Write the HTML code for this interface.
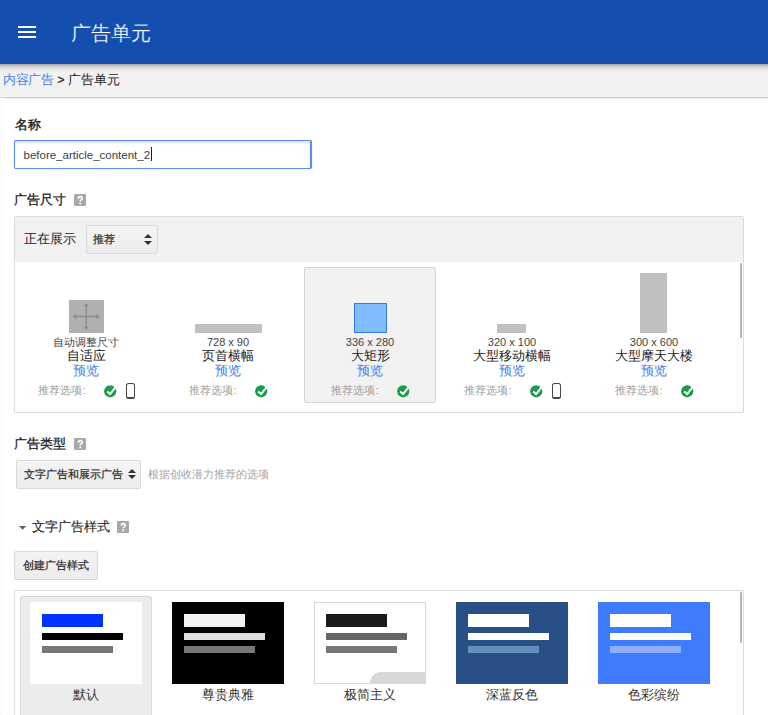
<!DOCTYPE html>
<html><head><meta charset="utf-8">
<style>
*{box-sizing:border-box;margin:0;padding:0}
html,body{width:768px;height:715px;overflow:hidden;background:#fff;font-family:"Liberation Sans",sans-serif;color:#222}
.a{position:absolute;white-space:nowrap}
#hdr{position:absolute;left:0;top:0;width:768px;height:64px;background:#144eaf;z-index:3}
#shd{position:absolute;left:0;top:64px;width:768px;height:9px;background:linear-gradient(rgba(0,0,0,.33),rgba(0,0,0,.12) 30%,rgba(0,0,0,.03) 70%,rgba(0,0,0,0));z-index:3}
.hb{position:absolute;left:18px;width:18px;height:2px;background:#fff}
#crumb{position:absolute;left:0;top:64px;width:768px;height:34px;background:#f2f2f2;border-bottom:1px solid #d0d0d0;box-shadow:0 1px 1px rgba(0,0,0,.07)}
.lbl{font-size:13px;font-weight:bold;color:#222;line-height:16px}
.help{position:absolute;width:12px;height:12px;border-radius:1px;background:#a8a8a8;color:#fff;font-size:12px;font-weight:bold;line-height:13px;text-align:center}
#sizebox{position:absolute;left:14px;top:216px;width:730px;height:197px;border:1px solid #dcdcdc;border-radius:2px;background:#fff;overflow:hidden}
#sizehead{position:absolute;left:0;top:0;width:728px;height:45px;background:#f1f1f1}
.sel{position:absolute;border:1px solid #d9d9d9;border-radius:2px;background:linear-gradient(#f4f4f4,#ececec);}
.arr{position:absolute;width:0;height:0;border-left:4px solid transparent;border-right:4px solid transparent}
.tile{position:absolute;top:50px;width:132px;height:136px}
.tile.on{background:#f1f1f1;box-shadow:inset 0 0 0 1px #d4d4d4;border-radius:3px}
.tile .c{position:absolute;left:0;width:132px;text-align:center;white-space:nowrap}
.dim{font-size:11px;color:#444;line-height:12px}
.nm{font-size:13px;color:#222;line-height:14px}
.pv{font-size:13px;color:#3f7eeb;line-height:14px}
.rec{position:absolute;font-size:11px;color:#9a9a9a;line-height:12px;white-space:nowrap}
.chk{position:absolute;width:12px;height:12px}
.ph{position:absolute;width:9px;height:16px;border:1.4px solid #555;border-radius:2px;border-bottom-width:2px}
.st{position:absolute;top:5px;width:132px;height:130px}
.st.on{background:#ececec;border-radius:3px;box-shadow:inset 0 0 0 1px #d9d9d9}
.pvw{position:absolute;left:10px;top:6px;width:112px;height:82px}
.bar{position:absolute;left:12px}
.stl{position:absolute;left:0;top:92px;width:132px;text-align:center;font-size:13px;color:#333;line-height:14px}
</style></head><body>
<div id="hdr">
  <div class="hb" style="top:26px"></div>
  <div class="hb" style="top:31px"></div>
  <div class="hb" style="top:36px"></div>
  <div class="a" style="left:71px;top:22px;font-size:20px;line-height:22px;color:#fff;-webkit-text-stroke:0.2px #144eaf">广告单元</div>
</div>
<div id="crumb">
  <div class="a" style="left:3px;top:8px;font-size:13px;line-height:16px;color:#4a80ee;letter-spacing:-0.3px">内容广告</div>
  <div class="a" style="left:57.5px;top:8px;font-size:12px;line-height:16px;color:#222;-webkit-text-stroke:0.3px #222">&gt;</div>
  <div class="a" style="left:68px;top:8px;font-size:13px;line-height:16px;color:#222">广告单元</div>
</div>
<div id="shd"></div>

<div class="a lbl" style="left:14.5px;top:117px;font-weight:400;color:#1e1e1e;-webkit-text-stroke:0.4px #1e1e1e">名称</div>
<div class="a" style="left:14px;top:140px;width:298px;height:29px;border:1px solid #5a8cf1;border-right-width:2px;border-radius:2px;box-shadow:0 0 1px rgba(66,133,244,.6),inset 0 2px 2px rgba(0,0,0,.12);"></div>
<div class="a" style="left:0;top:98px;width:5px;height:617px;background:linear-gradient(to right,#f9f9f9,#fff)"></div>
<div class="a" style="left:23.5px;top:148px;font-size:11.5px;line-height:14px;color:#404040">before_article_content_2</div><div class="a" style="left:151px;top:147px;width:1px;height:14px;background:#222"></div>

<div class="a lbl" style="left:14px;top:192px;font-weight:400;color:#1e1e1e;-webkit-text-stroke:0.3px #1e1e1e">广告尺寸</div>
<div class="help" style="left:74px;top:194px"><svg width="12" height="12" viewBox="0 0 12 12" style="position:absolute;left:0;top:0"><path d="M4.3 4.7 Q4.4 2.7 6.2 2.7 Q8.1 2.7 8.1 4.5 Q8.1 5.5 7.1 6.1 Q6.2 6.5 6.2 7.2" stroke="#fff" stroke-width="1.7" fill="none"/><rect x="5.3" y="8.5" width="1.8" height="1.7" fill="#fff"/></svg></div>

<div id="sizebox">
  <div id="sizehead">
    <div class="a" style="left:9px;top:14px;font-size:13px;line-height:16px;color:#222">正在展示</div>
    <div class="sel" style="left:71px;top:8px;width:72px;height:29px">
      <div class="a" style="left:6px;top:7px;font-size:11px;font-weight:400;-webkit-text-stroke:0.25px #333;line-height:13px;color:#2a2a2a">推荐</div>
      <div class="arr" style="left:57px;top:8px;border-bottom:4px solid #333"></div>
      <div class="arr" style="left:57px;top:15px;border-top:4px solid #333"></div>
    </div>
  </div>
  <!-- tiles -->
  <div class="tile" style="left:5px">
    <div class="a" style="left:49px;top:33px;width:35px;height:33px;background:#b0b0b0">
      <svg width="35" height="33" viewBox="0 0 35 33" style="position:absolute;left:0;top:0"><g stroke="#8c8c8c" stroke-width="1.4" fill="none"><line x1="17.3" y1="6" x2="17.3" y2="27"/><line x1="6.5" y1="16.5" x2="28" y2="16.5"/></g><g fill="#8c8c8c"><path d="M14.6 6.6 L17.3 3 L20 6.6Z"/><path d="M14.6 26.4 L17.3 30 L20 26.4Z"/><path d="M7.2 13.8 L3.8 16.5 L7.2 19.2Z"/><path d="M27.4 13.8 L30.8 16.5 L27.4 19.2Z"/></g></svg>
    </div>
    <div class="c dim" style="top:69px">自动调整尺寸</div>
    <div class="c nm" style="top:82px">自适应</div>
    <div class="c pv" style="top:97px">预览</div>
    <div class="row" style="position:absolute;left:0.5px;top:116px;width:132px;display:flex;justify-content:center;align-items:center;height:16px"><span class="rec" style="position:relative;top:-1px">推荐选项:</span><svg class="chk" viewBox="0 0 13 13" style="position:static;width:13px;height:13px;margin-left:18px;overflow:visible"><circle cx="6.2" cy="6.3" r="6.1" fill="#1a9c4b"/><path d="M3.2 6.6 L6.1 9.1 L11.6 2.2" stroke="#fff" stroke-width="2" fill="none" stroke-linecap="butt"/></svg><span style="display:inline-block;margin-left:9px;width:9px;height:16px;border:1.1px solid #484848;border-bottom-width:2.2px;border-radius:2.5px;box-sizing:border-box"></span></div>
  </div>
  <div class="tile" style="left:147px">
    <div class="a" style="left:33px;top:57px;width:67px;height:9px;background:#c0c0c0"></div>
    <div class="c dim" style="top:69px">728 x 90</div>
    <div class="c nm" style="top:82px">页首横幅</div>
    <div class="c pv" style="top:97px">预览</div>
    <div class="row" style="position:absolute;left:0.5px;top:116px;width:132px;display:flex;justify-content:center;align-items:center;height:16px"><span class="rec" style="position:relative;top:-1px">推荐选项:</span><svg class="chk" viewBox="0 0 13 13" style="position:static;width:13px;height:13px;margin-left:18px;overflow:visible"><circle cx="6.2" cy="6.3" r="6.1" fill="#1a9c4b"/><path d="M3.2 6.6 L6.1 9.1 L11.6 2.2" stroke="#fff" stroke-width="2" fill="none" stroke-linecap="butt"/></svg></div>
  </div>
  <div class="tile on" style="left:289px">
    <div class="a" style="left:50px;top:36px;width:33px;height:30px;background:#80bcfc;border:1px solid #2f7de1"></div>
    <div class="c dim" style="top:69px">336 x 280</div>
    <div class="c nm" style="top:82px">大矩形</div>
    <div class="c pv" style="top:97px">预览</div>
    <div class="row" style="position:absolute;left:0.5px;top:116px;width:132px;display:flex;justify-content:center;align-items:center;height:16px"><span class="rec" style="position:relative;top:-1px">推荐选项:</span><svg class="chk" viewBox="0 0 13 13" style="position:static;width:13px;height:13px;margin-left:18px;overflow:visible"><circle cx="6.2" cy="6.3" r="6.1" fill="#1a9c4b"/><path d="M3.2 6.6 L6.1 9.1 L11.6 2.2" stroke="#fff" stroke-width="2" fill="none" stroke-linecap="butt"/></svg></div>
  </div>
  <div class="tile" style="left:431px">
    <div class="a" style="left:51px;top:57px;width:29px;height:9px;background:#c0c0c0"></div>
    <div class="c dim" style="top:69px">320 x 100</div>
    <div class="c nm" style="top:82px">大型移动横幅</div>
    <div class="c pv" style="top:97px">预览</div>
    <div class="row" style="position:absolute;left:0.5px;top:116px;width:132px;display:flex;justify-content:center;align-items:center;height:16px"><span class="rec" style="position:relative;top:-1px">推荐选项:</span><svg class="chk" viewBox="0 0 13 13" style="position:static;width:13px;height:13px;margin-left:18px;overflow:visible"><circle cx="6.2" cy="6.3" r="6.1" fill="#1a9c4b"/><path d="M3.2 6.6 L6.1 9.1 L11.6 2.2" stroke="#fff" stroke-width="2" fill="none" stroke-linecap="butt"/></svg><span style="display:inline-block;margin-left:9px;width:9px;height:16px;border:1.1px solid #484848;border-bottom-width:2.2px;border-radius:2.5px;box-sizing:border-box"></span></div>
  </div>
  <div class="tile" style="left:573px">
    <div class="a" style="left:52px;top:6px;width:27px;height:60px;background:#c0c0c0"></div>
    <div class="c dim" style="top:69px">300 x 600</div>
    <div class="c nm" style="top:82px">大型摩天大楼</div>
    <div class="c pv" style="top:97px">预览</div>
    <div class="row" style="position:absolute;left:0.5px;top:116px;width:132px;display:flex;justify-content:center;align-items:center;height:16px"><span class="rec" style="position:relative;top:-1px">推荐选项:</span><svg class="chk" viewBox="0 0 13 13" style="position:static;width:13px;height:13px;margin-left:18px;overflow:visible"><circle cx="6.2" cy="6.3" r="6.1" fill="#1a9c4b"/><path d="M3.2 6.6 L6.1 9.1 L11.6 2.2" stroke="#fff" stroke-width="2" fill="none" stroke-linecap="butt"/></svg></div>
  </div>
  <div style="position:absolute;left:725px;top:46px;width:2px;height:75px;background:#b2b2b2;border-radius:1px"></div>
</div>

<div class="a lbl" style="left:14px;top:436px;font-weight:400;color:#1e1e1e;-webkit-text-stroke:0.3px #1e1e1e">广告类型</div>
<div class="help" style="left:74px;top:438px"><svg width="12" height="12" viewBox="0 0 12 12" style="position:absolute;left:0;top:0"><path d="M4.3 4.7 Q4.4 2.7 6.2 2.7 Q8.1 2.7 8.1 4.5 Q8.1 5.5 7.1 6.1 Q6.2 6.5 6.2 7.2" stroke="#fff" stroke-width="1.7" fill="none"/><rect x="5.3" y="8.5" width="1.8" height="1.7" fill="#fff"/></svg></div>
<div class="sel" style="left:16px;top:460px;width:125px;height:29px">
  <div class="a" style="left:7px;top:7px;font-size:11px;font-weight:400;-webkit-text-stroke:0.25px #333;line-height:13px;color:#2a2a2a">文字广告和展示广告</div>
  <div class="arr" style="left:111px;top:8px;border-bottom:4px solid #333"></div>
  <div class="arr" style="left:111px;top:14px;border-top:4px solid #333"></div>
</div>
<div class="a" style="left:148px;top:468px;font-size:11px;line-height:13px;color:#a2a2a2">根据创收潜力推荐的选项</div>

<svg style="position:absolute;left:18px;top:525px" width="10" height="6" viewBox="0 0 10 6"><path d="M1 1 L8.2 1 L4.6 4.8Z" fill="#606060"/></svg>
<div class="a" style="left:32px;top:519px;font-size:13px;line-height:16px;color:#2a2a2a;font-weight:400;-webkit-text-stroke:0.15px #2a2a2a">文字广告样式</div>
<div class="help" style="left:117px;top:521px"><svg width="12" height="12" viewBox="0 0 12 12" style="position:absolute;left:0;top:0"><path d="M4.3 4.7 Q4.4 2.7 6.2 2.7 Q8.1 2.7 8.1 4.5 Q8.1 5.5 7.1 6.1 Q6.2 6.5 6.2 7.2" stroke="#fff" stroke-width="1.7" fill="none"/><rect x="5.3" y="8.5" width="1.8" height="1.7" fill="#fff"/></svg></div>

<div class="sel" style="left:14px;top:551px;width:84px;height:29px">
  <div class="a" style="left:8px;top:7px;font-size:11px;font-weight:400;-webkit-text-stroke:0.25px #333;line-height:13px;color:#2a2a2a">创建广告样式</div>
</div>

<div id="stylebox" style="position:absolute;left:14px;top:590px;width:730px;height:140px;border:1px solid #dcdcdc;border-radius:2px;overflow:hidden">
  <div class="st on" style="left:5px">
    <div class="pvw" style="background:#fff">
      <div class="bar" style="top:12px;width:61px;height:13px;background:#0033ff"></div>
      <div class="bar" style="top:31px;width:81px;height:7px;background:#000"></div>
      <div class="bar" style="top:44px;width:71px;height:7px;background:#777"></div>
    </div>
    <div class="stl">默认</div>
  </div>
  <div class="st" style="left:147px">
    <div class="pvw" style="background:#000">
      <div class="bar" style="top:12px;width:61px;height:13px;background:#f2f2f2"></div>
      <div class="bar" style="top:31px;width:81px;height:7px;background:#ddd"></div>
      <div class="bar" style="top:44px;width:71px;height:7px;background:#777"></div>
    </div>
    <div class="stl">尊贵典雅</div>
  </div>
  <div class="st" style="left:289px">
    <div class="pvw" style="background:#fff;border:1px solid #d8d8d8;overflow:hidden">
      <div class="bar" style="left:11px;top:11px;width:61px;height:13px;background:#1a1a1a"></div>
      <div class="bar" style="left:11px;top:30px;width:81px;height:7px;background:#666"></div>
      <div class="bar" style="left:11px;top:43px;width:71px;height:7px;background:#777"></div>
      <div style="position:absolute;left:55px;top:69px;width:80px;height:30px;background:#d8d8d8;border-top-left-radius:11px"></div>
    </div>
    <div class="stl">极简主义</div>
  </div>
  <div class="st" style="left:431px">
    <div class="pvw" style="background:#285086">
      <div class="bar" style="top:12px;width:61px;height:13px;background:#fff"></div>
      <div class="bar" style="top:31px;width:81px;height:7px;background:#fff"></div>
      <div class="bar" style="top:44px;width:71px;height:7px;background:#6190b8"></div>
    </div>
    <div class="stl">深蓝反色</div>
  </div>
  <div class="st" style="left:573px">
    <div class="pvw" style="background:#3f7bfd">
      <div class="bar" style="top:12px;width:61px;height:13px;background:#fff"></div>
      <div class="bar" style="top:31px;width:81px;height:7px;background:#fff"></div>
      <div class="bar" style="top:44px;width:71px;height:7px;background:#8db0fa"></div>
    </div>
    <div class="stl">色彩缤纷</div>
  </div>
  <div style="position:absolute;left:725px;top:1px;width:2px;height:51px;background:#b2b2b2;border-radius:1px"></div>
</div>
</body></html>
